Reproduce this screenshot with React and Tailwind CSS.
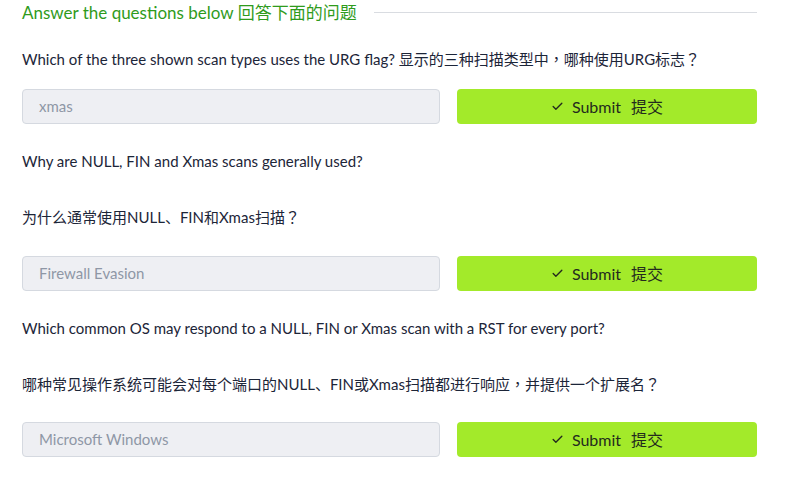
import React from "react";
import { Check } from "lucide-react";

const font = {
  fontFamily: '"Lato", "Noto Sans CJK SC", sans-serif',
};

// full-width punctuation sits centred in the reference, like the TC font draws it
const P = ({ children }) => (
  <span lang="zh-TW" style={{ fontFamily: '"Noto Sans CJK TC", sans-serif' }}>
    {children}
  </span>
);

const AnswerRow = ({ value, className }) => (
  <div className={`flex gap-[17px] ${className}`}>
    <div className="flex h-[35px] flex-1 items-center rounded-[4px] border border-[#d5d9e0] bg-[#eeeff3] pl-[16px] text-[15px] text-[#8e97a6]">
      {value}
    </div>
    <button
      type="button"
      className="flex h-[35px] w-[300px] items-center justify-center gap-[8px] rounded-[4px] bg-[#a3ea2a] text-[16px] text-[#232a1e]"
    >
      <Check size={13} strokeWidth={2.5} />
      <span className="flex gap-[10px]">
        <span>Submit</span>
        <span>提交</span>
      </span>
    </button>
  </div>
);

const App = () => {
  return (
    <div className="h-[481px] w-[787px] bg-white pl-[22px] pr-[30px] text-[#1c2538]" style={font}>
      <div className="flex h-[26px] items-center gap-[17px]">
        <h2 className="shrink-0 text-[17px] leading-[26px] text-[#2f9b1c]">
          Answer the questions below 回答下面的问题
        </h2>
        <div className="mt-[-2px] h-px flex-1 bg-[#d9dce1]" />
      </div>

      <p className="mt-[21px] text-[15px] leading-[24px]">
        Which of the three shown scan types uses the URG flag? 显示的三种扫描类型中<P>，</P>哪种使用URG标志<P>？</P>
      </p>
      <AnswerRow value="xmas" className="mt-[18px]" />

      <p className="mt-[25px] text-[15px] leading-[24px]">
        Why are NULL, FIN and Xmas scans generally used?
      </p>
      <p className="mt-[32px] text-[15px] leading-[24px]">
        为什么通常使用NULL、FIN和Xmas扫描<P>？</P>
      </p>
      <AnswerRow value="Firewall Evasion" className="mt-[27px]" />

      <p className="mt-[25px] text-[15px] leading-[24px]">
        Which common OS may respond to a NULL, FIN or Xmas scan with a RST for every port?
      </p>
      <p className="mt-[32px] text-[15px] leading-[24px]">
        哪种常见操作系统可能会对每个端口的NULL、FIN或Xmas扫描都进行响应<P>，</P>并提供一个扩展名<P>？</P>
      </p>
      <AnswerRow value="Microsoft Windows" className="mt-[26px]" />
    </div>
  );
};

export default App;
